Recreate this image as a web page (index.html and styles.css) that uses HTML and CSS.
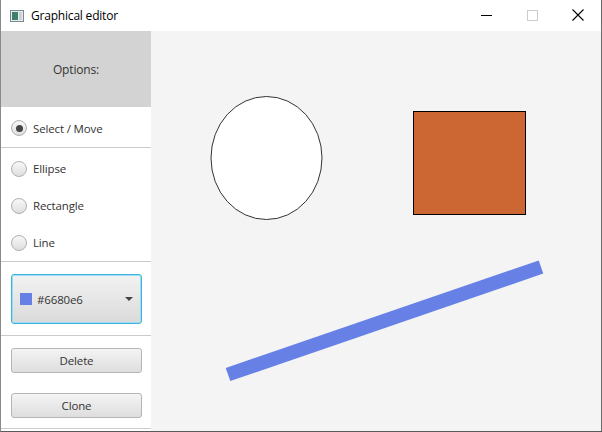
FILE: index.html
```html
<!DOCTYPE html>
<html>
<head>
<meta charset="utf-8">
<link rel="stylesheet" href="styles.css">
</head>
<body>
<div class="window">
  <div class="titlebar">
    <div class="title-left">
      <svg class="app-icon" width="14" height="12" viewBox="0 0 14 12">
        <rect x="0.5" y="0.5" width="13" height="11" fill="#e8ecec" stroke="#7a8a8a"/>
        <rect x="2" y="2" width="6" height="8" fill="#3f7f6f"/>
        <rect x="9" y="2" width="3" height="8" fill="#c9d4d4"/>
      </svg>
      <span class="title">Graphical editor</span>
    </div>
    <div class="controls">
      <svg class="ctl" width="46" height="30" viewBox="0 0 46 30"><line x1="18" y1="15.5" x2="29" y2="15.5" stroke="#000" stroke-width="1"/></svg>
      <svg class="ctl" width="46" height="30" viewBox="0 0 46 30"><rect x="18.5" y="10.5" width="10" height="10" fill="none" stroke="#cccccc" stroke-width="1"/></svg>
      <svg class="ctl" width="46" height="30" viewBox="0 0 46 30"><path d="M17.5 9.5 L28.5 20.5 M28.5 9.5 L17.5 20.5" stroke="#000" stroke-width="1.1"/></svg>
    </div>
  </div>
  <div class="main">
    <aside class="sidebar">
      <div class="header">Options:</div>
      <div class="radio-row first"><span class="radio checked"></span><span>Select / Move</span></div>
      <div class="sep"></div>
      <div class="radio-group">
        <div class="radio-row"><span class="radio"></span><span>Ellipse</span></div>
        <div class="radio-row"><span class="radio"></span><span>Rectangle</span></div>
        <div class="radio-row"><span class="radio"></span><span>Line</span></div>
      </div>
      <div class="sep"></div>
      <div class="picker-wrap">
        <div class="picker">
          <span class="swatch"></span>
          <span class="picker-text">#6680e6</span>
          <span class="arrow"></span>
        </div>
      </div>
      <div class="sep"></div>
      <div class="buttons">
        <div class="btn">Delete</div>
        <div class="btn">Clone</div>
      </div>
      <div class="sep"></div>
    </aside>
    <div class="canvas">
      <svg width="450" height="400" viewBox="0 0 450 400">
        <ellipse cx="115.5" cy="127" rx="55.5" ry="61.5" fill="#ffffff" stroke="#333333" stroke-width="1"/>
        <rect x="262.5" y="80.5" width="112" height="103" fill="#cc6633" stroke="#000000" stroke-width="1"/>
        <line x1="77" y1="343.5" x2="390" y2="236" stroke="#6680e6" stroke-width="14"/>
      </svg>
    </div>
  </div>
</div>
</body>
</html>
```

FILE: styles.css
```css
html, body {
  margin: 0;
  padding: 0;
  background: #ffffff;
}
.window {
  width: 602px;
  height: 432px;
  box-sizing: border-box;
  border-left: 1px solid #8a8a8a;
  border-right: 1px solid #6a6a6a;
  border-bottom: 1px solid #5a5a5a;
  display: flex;
  flex-direction: column;
  font-family: "Open Sans", "Noto Sans", sans-serif;
  overflow: hidden;
}
.titlebar {
  height: 31px;
  flex: none;
  display: flex;
  justify-content: space-between;
  align-items: flex-start;
  background: #ffffff;
}
.title-left {
  display: flex;
  align-items: center;
  height: 31px;
  padding-left: 9px;
}
.app-icon {
  display: block;
}
.title {
  font-size: 12px;
  color: #000;
  margin-left: 7px;
  font-family: "Open Sans", sans-serif;
  letter-spacing: -0.2px;
}
.controls {
  display: flex;
  padding-right: 0;
}
.ctl {
  display: block;
}
.main {
  flex: 1;
  display: flex;
  min-height: 0;
}
.sidebar {
  width: 150px;
  flex: none;
  background: #ffffff;
  display: flex;
  flex-direction: column;
  font-size: 11.5px;
  color: #333333;
  letter-spacing: -0.15px;
}
.header {
  height: 76px;
  background: #d3d3d3;
  display: flex;
  align-items: center;
  justify-content: center;
  color: #333;
  font-size: 12px;
}
.sep {
  height: 1px;
  background: #cbcbcb;
  flex: none;
}
.radio-row {
  display: flex;
  align-items: center;
  height: 37px;
  padding-left: 10px;
}
.radio-row.first {
  height: 40px;
  padding-top: 2px;
  box-sizing: border-box;
}
.radio-group {
  padding-top: 2px;
  padding-bottom: 0;
}
.radio {
  width: 14px;
  height: 14px;
  border-radius: 50%;
  border: 1px solid #b0b0b0;
  background: linear-gradient(#f8f8f8, #dedede);
  margin-right: 6px;
  display: flex;
  align-items: center;
  justify-content: center;
}
.radio.checked::after {
  content: "";
  width: 7px;
  height: 7px;
  border-radius: 50%;
  background: #444;
}
.picker-wrap {
  padding: 12px 9px 11px 10px;
}
.picker {
  height: 48px;
  border: 1px solid #3bb4e0;
  box-shadow: inset 0 0 0 1px #9edcf3;
  border-radius: 3px;
  background: linear-gradient(#f2f2f2, #dadada);
  display: flex;
  align-items: center;
  padding-left: 8px;
  padding-right: 8px;
}
.swatch {
  width: 12px;
  height: 12px;
  background: #6680e6;
  margin-right: 5px;
}
.picker-text {
  flex: 1;
  color: #333;
}
.arrow {
  width: 0;
  height: 0;
  border-left: 4px solid transparent;
  border-right: 4px solid transparent;
  border-top: 4px solid #444;
}
.buttons {
  display: flex;
  flex-direction: column;
  gap: 20px;
  padding: 12px 9px 10px 10px;
}
.btn {
  height: 23px;
  border: 1px solid #b5b5b5;
  border-radius: 3px;
  background: linear-gradient(#f4f4f4, #dedede);
  display: flex;
  align-items: center;
  justify-content: center;
  color: #333;
}
.canvas {
  flex: 1;
  background: #f4f4f4;
}
.canvas svg {
  display: block;
}
```
